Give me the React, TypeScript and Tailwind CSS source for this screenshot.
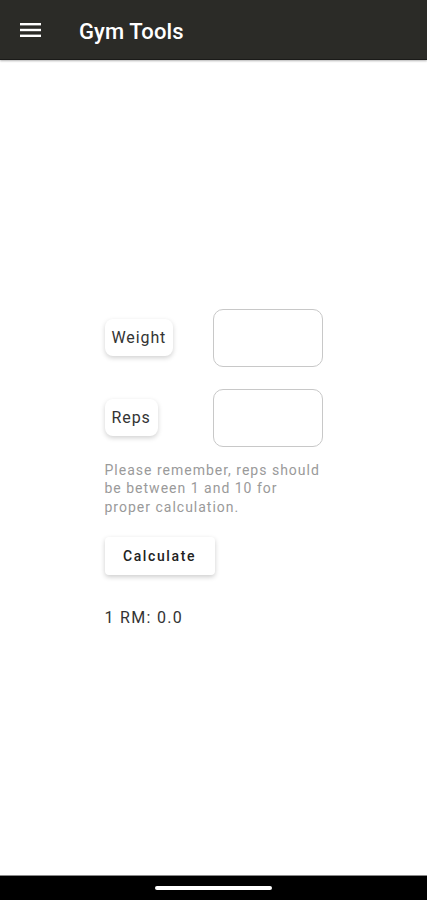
import React from "react";

export default function App() {
  return (
    <div className="w-[427px] h-[900px] bg-white flex flex-col overflow-hidden" style={{ fontFamily: "Roboto, 'Noto Sans', sans-serif" }}>
      <div className="h-[60px] bg-[#2b2b27] flex items-center shrink-0 border-b border-[#1a1a18] shadow-[0_1px_2px_rgba(0,0,0,0.3)]">
        <div className="w-[79px] pl-[20px] flex items-center">
          <svg width="22" height="16" viewBox="0 0 22 16">
            <rect x="0" y="1" width="21" height="2.4" fill="#fff" />
            <rect x="0" y="6.8" width="21" height="2.4" fill="#fff" />
            <rect x="0" y="12.6" width="21" height="2.4" fill="#fff" />
          </svg>
        </div>
        <span className="text-white text-[22px] font-medium tracking-[0.1px] mt-[4px]">Gym Tools</span>
      </div>
      <div className="flex-1 flex items-center justify-center">
        <div className="w-[218px] flex flex-col mt-[4px]">
          <div className="flex items-center justify-between h-[58px]">
            <div className="h-[37px] px-[7px] rounded-[8px] bg-white shadow-[0_2px_5px_rgba(0,0,0,0.18)] flex items-center text-[16px] text-[#333] tracking-[0.9px]">Weight</div>
            <div className="w-[110px] h-[58px] rounded-[10px] border border-[#c8c8c8]" />
          </div>
          <div className="flex items-center justify-between h-[58px] mt-[22px]">
            <div className="h-[37px] px-[7px] rounded-[8px] bg-white shadow-[0_2px_5px_rgba(0,0,0,0.18)] flex items-center text-[16px] text-[#333] tracking-[0.9px]">Reps</div>
            <div className="w-[110px] h-[58px] rounded-[10px] border border-[#c8c8c8]" />
          </div>
          <p className="mt-[14px] text-[14px] leading-[18.5px] text-[#9a9a9a] w-[218px] tracking-[1px]">
            Please remember, reps should be between 1 and 10 for proper calculation.
          </p>
          <div className="mt-[21px]">
            <button className="w-[110px] h-[38px] rounded-[4px] bg-white shadow-[0_2px_5px_rgba(0,0,0,0.2)] text-[14px] font-medium text-[#222] tracking-[1.6px]">Calculate</button>
          </div>
          <div className="mt-[31px] text-[16px] text-[#333] tracking-[1.3px]">1 RM: 0.0</div>
        </div>
      </div>
      <div className="h-[25px] bg-black shrink-0 flex items-center justify-center border-t border-[#888]">
        <div className="w-[117px] h-[4px] rounded-full bg-white" />
      </div>
    </div>
  );
}
